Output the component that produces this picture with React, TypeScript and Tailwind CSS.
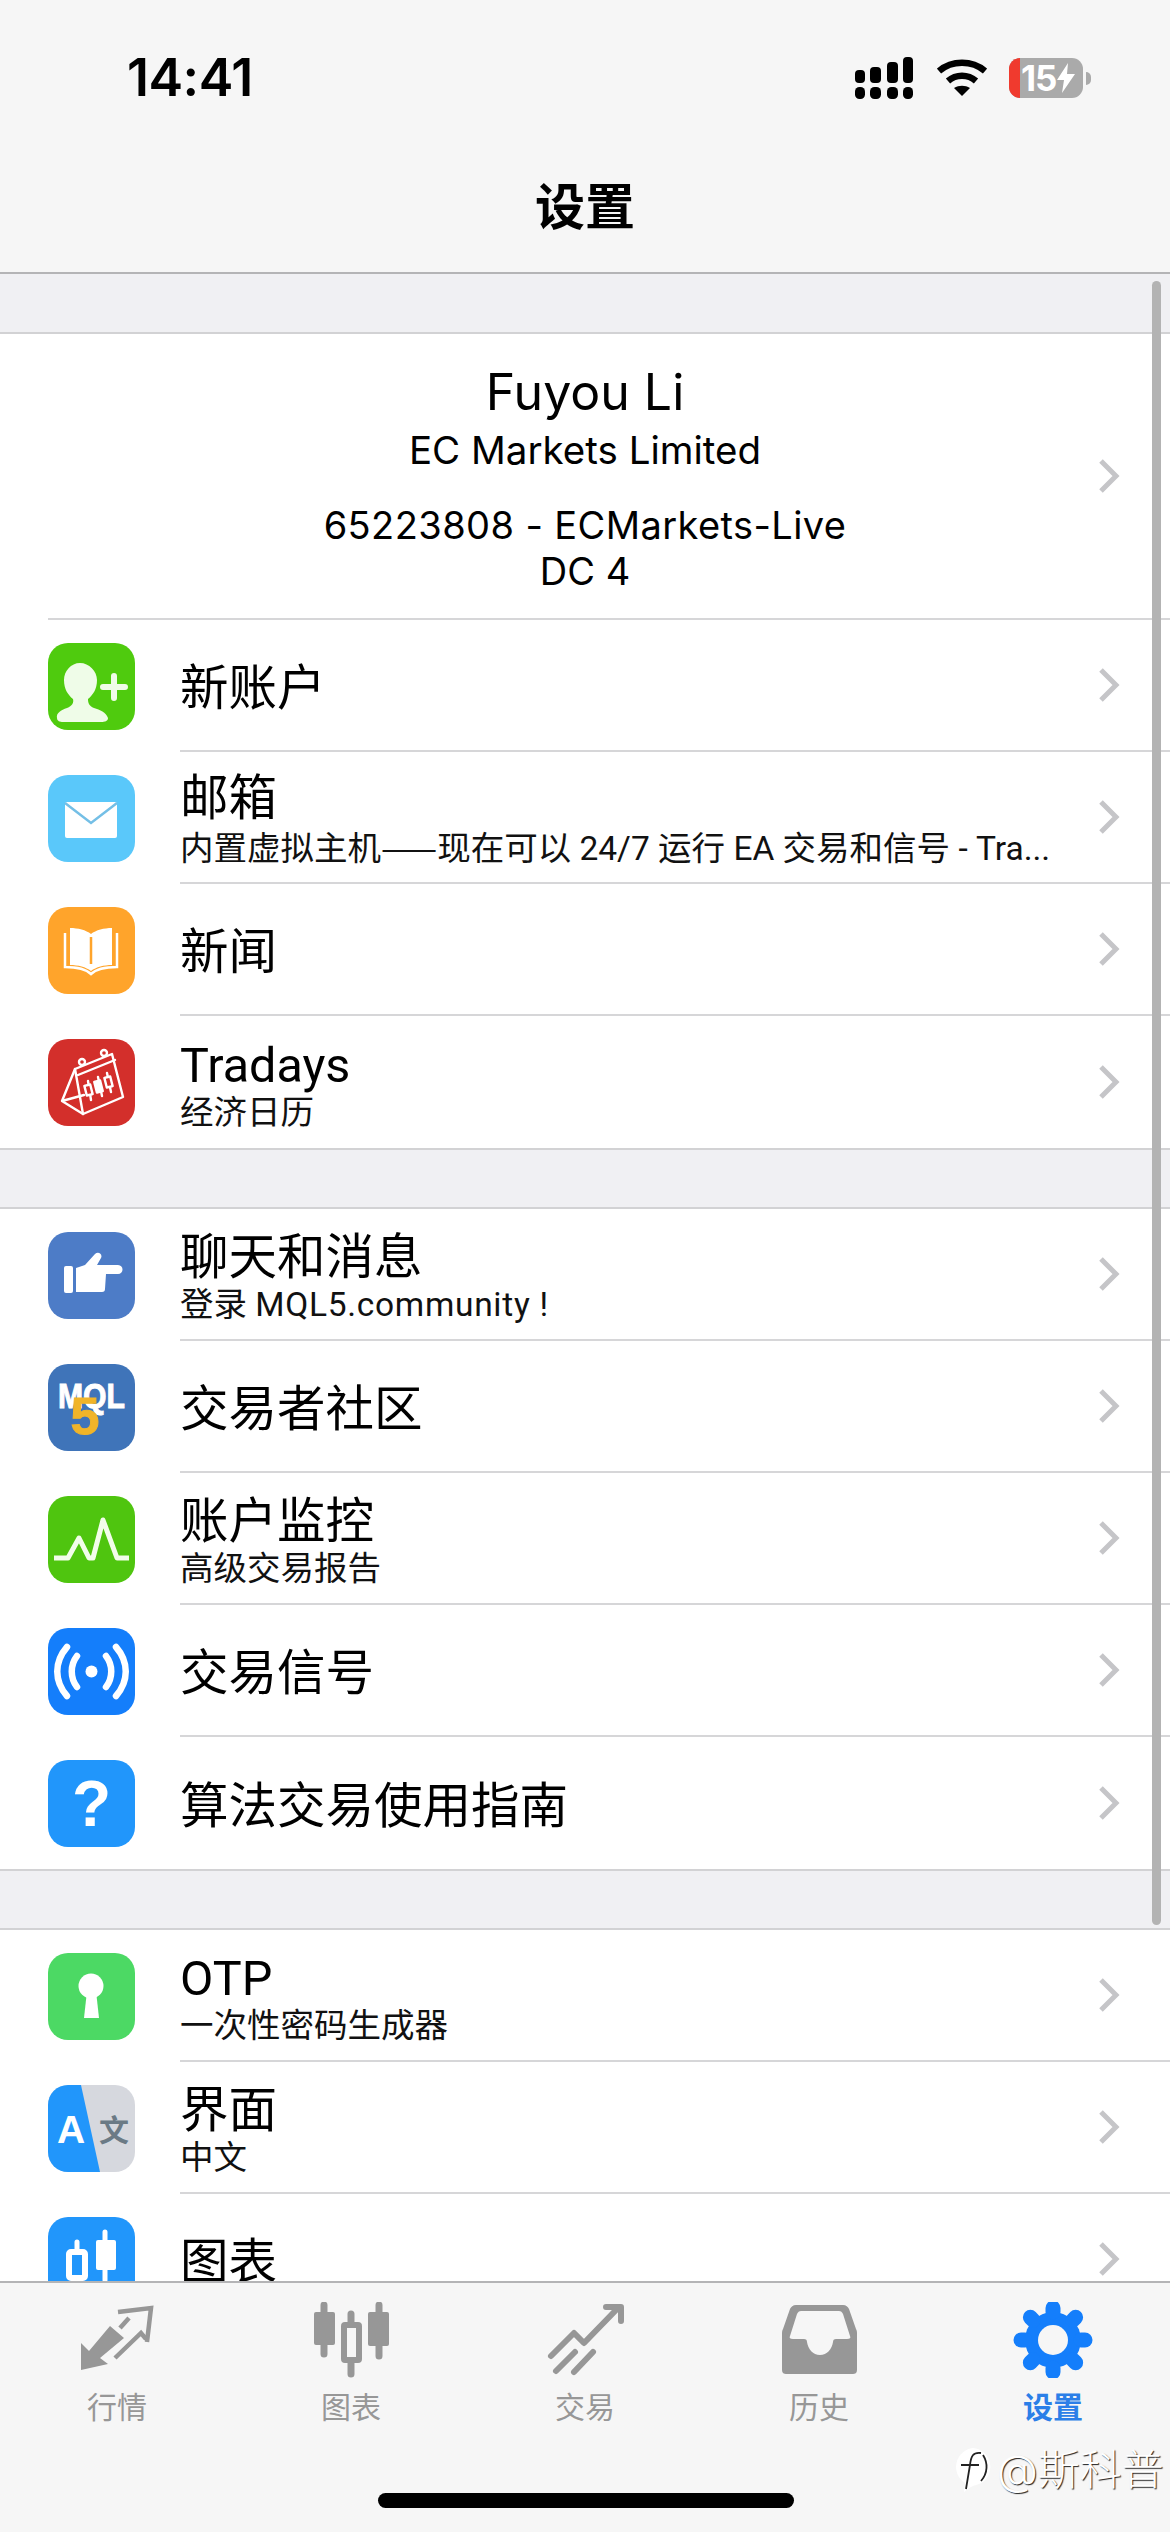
import type { ReactNode } from "react";

const sans = "font-['Inter','Noto_Sans_CJK_SC',sans-serif]";
const rowFont = "font-['Roboto','Noto_Sans_CJK_SC',sans-serif]";

function Chevron() {
  return (
    <svg width="22" height="36" viewBox="0 0 22 36" className="shrink-0">
      <path d="M3 3l15 15L3 33" fill="none" stroke="#c5c5c8" strokeWidth="5" />
    </svg>
  );
}

function Tile({ bg, children }: { bg: string; children: ReactNode }) {
  return (
    <div className="h-[87px] w-[87px] shrink-0 overflow-hidden rounded-[20px]" style={{ background: bg }}>
      <svg width="87" height="87" viewBox="0 0 87 87">
        {children}
      </svg>
    </div>
  );
}

function Row({
  icon,
  title,
  sub,
  last,
}: {
  icon: ReactNode;
  title: string;
  sub?: ReactNode;
  last?: boolean;
}) {
  return (
    <div className="flex h-[132px] items-center pl-[48px]">
      {icon}
      <div
        className={`ml-[45px] flex h-full min-w-0 flex-1 items-center pr-[50px] ${
          last ? "" : "border-b-2 border-[#d6d6d8]"
        }`}
      >
        <div className={`min-w-0 flex-1 ${rowFont} ${sub ? "pt-[4px]" : "pt-[8px]"}`}>
          <div className="text-[48.5px] leading-[58px] text-black">{title}</div>
          {sub && <div className="-mt-[1px] whitespace-nowrap text-[33.5px] leading-[38px] text-[#111]">{sub}</div>}
        </div>
        <Chevron />
      </div>
    </div>
  );
}

const icons = {
  account: (
    <Tile bg="#4fcb0e">
      <path
        d="M26 1c-9 0-16 8-16 17 0 9 4 15 9 19 1 4-1 7-6 9-6 2-11 5-10 10 0 3 3 4 6 4h38c4 0 7-1 7-4-2-6-8-8-14-10-5-2-6-5-6-9 5-4 9-10 9-19C43 9 35 1 26 1z"
        transform="translate(6 19)"
        fill="#effce8"
      />
      <path d="M66 33v22M55 44h22" stroke="#effce8" strokeWidth="6" strokeLinecap="round" />
    </Tile>
  ),
  mail: (
    <Tile bg="#5ac8fa">
      <rect x="17" y="27" width="52" height="36" rx="2" fill="#fff" />
      <path d="M17 28l26 20 26-20" fill="none" stroke="#74bfe6" strokeWidth="2.5" />
    </Tile>
  ),
  book: (
    <Tile bg="#ffa42b">
      <path d="M22 21c8 0 16 2 21 6 5-4 13-6 21-6v37c-8 0-16 2-21 6-5-4-13-6-21-6z" fill="#fff" />
      <path d="M43 30v27" stroke="#ffa42b" strokeWidth="2.5" />
      <path d="M17 26v34c10 0 20 1 26 7 6-6 16-7 26-7V26" fill="none" stroke="#fff" strokeWidth="2.5" />
    </Tile>
  ),
  tradays: (
    <Tile bg="#d32f2b">
      <g fill="none" stroke="#fff" strokeWidth="2.4" strokeLinejoin="round" strokeLinecap="round">
        <path d="M27 30L64 15l11 43-40 17z" />
        <path d="M27 30L14 62l21 13M14 62l22-6" />
        <path d="M30 36l37-15" />
        <circle cx="34" cy="23" r="3" />
        <circle cx="56" cy="14" r="3" />
        <path d="M40 42l3 19M50 38l4 19M59 34l4 19" />
        <rect x="37.5" y="46" width="6" height="10" transform="rotate(-14 40.5 51)" fill="#d32f2b" />
        <rect x="47.5" y="42" width="6" height="11" transform="rotate(-14 50.5 47.5)" fill="#fff" />
        <rect x="57.5" y="38" width="6" height="10" transform="rotate(-14 60.5 43)" fill="#d32f2b" />
      </g>
    </Tile>
  ),
  hand: (
    <Tile bg="#4d7cc7">
      <rect x="16" y="34" width="9" height="27" rx="2" fill="#fff" />
      <path
        d="M28 36l9-3 10-11c3-3 8 0 6 4l-4 7h21c6 0 6 9 0 9H58l-1 15c0 2-1 3-3 3H28z"
        fill="#fff"
      />
    </Tile>
  ),
  mql: (
    <Tile bg="#3f74b9">
      <text
        x="10"
        y="44"
        textLength="67"
        lengthAdjust="spacingAndGlyphs"
        fontFamily="Liberation Sans"
        fontWeight="700"
        fontSize="35"
        fill="#fff"
        stroke="#fff"
        strokeWidth="1"
      >
        MQL
      </text>
      <text
        x="37"
        y="70"
        textAnchor="middle"
        fontFamily="Liberation Sans"
        fontWeight="700"
        fontSize="52"
        fill="#f0b429"
        stroke="#f0b429"
        strokeWidth="1"
      >
        5
      </text>
    </Tile>
  ),
  pulse: (
    <Tile bg="#4fc50f">
      <path
        d="M6 62h14l11-20 10 20h4l10-38 14 38h12"
        fill="none"
        stroke="#f2fdea"
        strokeWidth="5"
        strokeLinejoin="round"
      />
    </Tile>
  ),
  signal: (
    <Tile bg="#147efb">
      <circle cx="43.5" cy="43.5" r="6" fill="#fff" />
      <g fill="none" stroke="#fff" strokeWidth="6.5" strokeLinecap="round">
        <path d="M29 28c-7 9-7 22 0 31M58 28c7 9 7 22 0 31" />
        <path d="M19 19c-13 15-13 34 0 49M68 19c13 15 13 34 0 49" />
      </g>
    </Tile>
  ),
  help: (
    <Tile bg="#2196fb">
      <text x="43.5" y="66" textAnchor="middle" fontFamily="Liberation Sans" fontWeight="700" fontSize="64" fill="#fff">
        ?
      </text>
    </Tile>
  ),
  otp: (
    <Tile bg="#4cd964">
      <circle cx="43" cy="33" r="12.5" fill="#fff" />
      <path d="M39 38h9l3 27H36z" fill="#fff" />
    </Tile>
  ),
  lang: (
    <Tile bg="#d6d8de">
      <path d="M0 0h33l19 87H0z" fill="#2196fb" />
      <text x="23" y="58" textAnchor="middle" fontFamily="Liberation Sans" fontWeight="700" fontSize="39" fill="#fff">
        A
      </text>
      <text x="66" y="56" textAnchor="middle" fontFamily="Noto Sans CJK SC" fontWeight="700" fontSize="30" fill="#6b7a85">
        文
      </text>
    </Tile>
  ),
  chart: (
    <Tile bg="#2196fb">
      <path d="M29 25v62M57 15v48" stroke="#fff" strokeWidth="5" strokeLinecap="round" />
      <rect x="21" y="35" width="16" height="26" rx="2" fill="#2196fb" stroke="#fff" strokeWidth="6" />
      <rect x="48" y="23" width="20" height="30" rx="2" fill="#fff" />
    </Tile>
  ),
};

const TAB_GREY = "#979797";

function TabIcon({ children }: { children: ReactNode }) {
  return (
    <svg width="90" height="76" viewBox="0 0 90 76">
      {children}
    </svg>
  );
}

const tabs: { label: string; active?: boolean; icon: ReactNode }[] = [
  {
    label: "行情",
    icon: (
      <TabIcon>
        <path d="M9 41l8 8 21-25 14 12-24 20 8 6-27 6z" fill={TAB_GREY} />
        <g fill="none" stroke={TAB_GREY} strokeWidth="4.5">
          <path d="M46 10l33-4-4 34" />
          <path d="M48 26l9-10" />
          <path d="M43 56l26-25 5 6" />
        </g>
      </TabIcon>
    ),
  },
  {
    label: "图表",
    icon: (
      <TabIcon>
        <path d="M18 3v49M45 12v60M73 3v51" stroke={TAB_GREY} strokeWidth="7" strokeLinecap="round" />
        <rect x="8" y="10" width="21" height="33" rx="2" fill={TAB_GREY} />
        <rect x="38" y="23" width="15" height="35" rx="1" fill="#f6f6f6" stroke={TAB_GREY} strokeWidth="6" />
        <rect x="62" y="10" width="21" height="34" rx="2" fill={TAB_GREY} />
      </TabIcon>
    ),
  },
  {
    label: "交易",
    icon: (
      <TabIcon>
        <g fill="none" stroke={TAB_GREY} strokeWidth="6" strokeLinecap="round" strokeLinejoin="round">
          <path d="M11 54l23-23 10 10 33-34" />
          <path d="M16 69l19-19M34 70l19-20" />
          <path d="M66 5h15v14" />
        </g>
      </TabIcon>
    ),
  },
  {
    label: "历史",
    icon: (
      <TabIcon>
        <path
          fillRule="evenodd"
          d="M22 3h47c3 0 5 2 6 4l7 20c1 2 1 3 1 5v36c0 3-2 4-4 4H12c-2 0-4-1-4-4V32c0-2 0-3 1-5l7-20c1-2 3-4 6-4zM27 9c-2 0-3 1-4 3l-7 22c-1 2 0 3 3 3h11c2 0 3 1 3 3 1 7 6 13 13 13s12-6 13-13c0-2 1-3 3-3h11c3 0 4-1 3-3l-7-22c-1-2-2-3-4-3z"
          fill={TAB_GREY}
        />
      </TabIcon>
    ),
  },
  {
    label: "设置",
    active: true,
    icon: (
      <TabIcon>
        <g transform="translate(45 38)">
          <circle r="28" fill="#147efb" />
          {[0, 45, 90, 135, 180, 225, 270, 315].map((deg) => (
            <path
              key={deg}
              d="M0-28v-4"
              transform={`rotate(${deg})`}
              stroke="#147efb"
              strokeWidth="15"
              strokeLinecap="round"
            />
          ))}
          <circle r="15" fill="#f6f6f6" />
        </g>
      </TabIcon>
    ),
  },
];

function StatusIcons() {
  return (
    <div className="flex items-center">
      <svg width="60" height="44" viewBox="0 0 60 44">
        <g fill="#000">
          <rect x="1" y="14" width="10" height="13" rx="4" />
          <rect x="16" y="11" width="11" height="16" rx="4" />
          <rect x="33" y="6" width="11" height="21" rx="4" />
          <rect x="49" y="1" width="10" height="26" rx="4" />
          <rect x="1" y="31" width="10" height="12" rx="4.5" />
          <rect x="16" y="31" width="11" height="12" rx="4.5" />
          <rect x="33" y="31" width="11" height="12" rx="4.5" />
          <rect x="49" y="31" width="10" height="12" rx="4.5" />
        </g>
      </svg>
      <svg width="50" height="38" viewBox="0 0 50 38" className="ml-[23px]">
        <g fill="none" stroke="#000" strokeWidth="6.5">
          <path d="M2 12c13-11 33-11 46 0" />
          <path d="M11 22c8-7 20-7 28 0" />
        </g>
        <path d="M17 29c5-3 11-3 16 0l-8 8z" fill="#000" />
      </svg>
      <div className="ml-[22px] flex h-[40px] w-[74px] overflow-hidden rounded-[11px] bg-[#aaaaaa]">
        <div className="w-[11px] bg-[#f03a2e]" />
        <div className="flex flex-1 items-center pl-[1px] font-['Inter',sans-serif] text-[35px] font-bold leading-none tracking-[-1px] text-white">
          15
          <svg width="18" height="30" viewBox="0 0 18 30" className="ml-[1px]">
            <path d="M11 0L0 17h7l-2 13L18 11h-8z" fill="#fff" />
          </svg>
        </div>
      </div>
      <div className="ml-[3px] h-[13px] w-[5px] rounded-r-full bg-[#aaaaaa]" />
    </div>
  );
}

export default function App() {
  return (
    <div className={`relative flex h-[2532px] w-[1170px] flex-col overflow-hidden bg-[#f0f0f3] ${sans}`}>
      {/* nav */}
      <header className="h-[274px] shrink-0 border-b-2 border-[#b4b4b6] bg-[#f6f6f6]">
        <div className="flex h-[156px] items-center justify-between pl-[127px] pr-[79px]">
          <span className="text-[52px] font-semibold leading-none tracking-[-0.5px] text-black">14:41</span>
          <StatusIcons />
        </div>
        <h1 className="mt-[16px] text-center text-[50px] font-bold leading-[70px] text-black">设置</h1>
      </header>

      {/* list */}
      <main className="min-h-0 flex-1 overflow-hidden">
        <div className="h-[60px] border-b-2 border-[#d2d2d4]" />

        <section className="bg-white">
          <div className="ml-[48px] flex h-[286px] items-center border-b-2 border-[#d6d6d8] pr-[50px]">
            <div className="flex-1 pl-[24px] pt-[4px] text-center text-black">
              <div className="text-[50px] leading-[60px]">Fuyou Li</div>
              <div className="mt-[3px] text-[38.5px] leading-[50px]">EC Markets Limited</div>
              <div className="mt-[27px] text-[38px] leading-[46px] tracking-[0.4px]">65223808 - ECMarkets-Live</div>
              <div className="text-[38px] leading-[46px]">DC 4</div>
            </div>
            <Chevron />
          </div>
          <Row icon={icons.account} title="新账户" />
          <Row
            icon={icons.mail}
            title="邮箱"
            sub={
              <>
                内置虚拟主机<span className="font-['Noto_Sans_CJK_SC',sans-serif]">——</span>现在可以 24/7 运行 EA 交易和信号 - Tra...
              </>
            }
          />
          <Row icon={icons.book} title="新闻" />
          <Row icon={icons.tradays} title="Tradays" sub="经济日历" last />
        </section>

        <div className="h-[61px] border-y-2 border-[#d2d2d4]" />

        <section className="bg-white">
          <Row
            icon={icons.hand}
            title="聊天和消息"
            sub={
              <>
                登录 <span className="tracking-[0.7px]">MQL5.community !</span>
              </>
            }
          />
          <Row icon={icons.mql} title="交易者社区" />
          <Row icon={icons.pulse} title="账户监控" sub="高级交易报告" />
          <Row icon={icons.signal} title="交易信号" />
          <Row icon={icons.help} title="算法交易使用指南" last />
        </section>

        <div className="h-[61px] border-y-2 border-[#d2d2d4]" />

        <section className="bg-white">
          <Row icon={icons.otp} title="OTP" sub="一次性密码生成器" />
          <Row icon={icons.lang} title="界面" sub="中文" />
          <Row icon={icons.chart} title="图表" />
        </section>
      </main>

      {/* tab bar */}
      <nav className="relative h-[251px] shrink-0 border-t-2 border-[#b4b4b6] bg-[#f6f6f6]">
        <div className="grid grid-cols-5 pt-[19px]">
          {tabs.map((t) => (
            <div key={t.label} className="flex flex-col items-center">
              {t.icon}
              <span
                className={`mt-[10px] text-[30px] leading-[38px] ${
                  t.active ? "font-bold text-[#2b7fe8]" : "text-[#979797]"
                }`}
              >
                {t.label}
              </span>
            </div>
          ))}
        </div>
        <div className="absolute bottom-[24px] left-[378px] h-[15px] w-[416px] rounded-full bg-black" />
        {/* watermark */}
        <div className="absolute left-[951px] top-[162px] flex items-center text-[42px] leading-[48px] text-white [text-shadow:1px_1px_1px_#222]">
          <svg width="44" height="50" viewBox="0 0 44 50">
            <path d="M22 3a19 19 0 0 1 10 34c-4 3-11 3-15 7l-4 3 1-9A19 19 0 0 1 22 3z" fill="#fff" />
            <path
              d="M30 8c-8-1-10 3-11 12l-4 24M10 20h18M32 10c5 8 5 18-2 26"
              fill="none"
              stroke="#222"
              strokeWidth="1.8"
            />
          </svg>
          <span className="ml-[2px] font-light">@斯科普</span>
        </div>
      </nav>

      {/* scroll indicator */}
      <div className="absolute left-[1152px] top-[281px] h-[1644px] w-[9px] rounded-full bg-[#b3b3b3]" />
    </div>
  );
}
